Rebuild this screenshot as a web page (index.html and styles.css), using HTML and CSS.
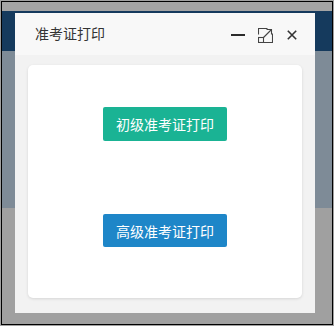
FILE: index.html
```html
<!DOCTYPE html>
<html lang="zh">
<head>
<meta charset="utf-8">
<link rel="stylesheet" href="styles.css">
</head>
<body>
<div class="screen">
  <div class="band band-top"></div>
  <div class="band band-navy"></div>
  <div class="band band-mid"></div>
  <div class="band band-bottom"></div>

  <div class="dialog">
    <div class="dialog-head">
      <span class="dialog-title">准考证打印</span>
      <div class="dialog-tools">
        <svg class="ico ico-min" width="14" height="14" viewBox="0 0 14 14"><rect x="0" y="6" width="14" height="2" fill="#2b2b2b"/></svg>
        <svg class="ico ico-max" width="15" height="15" viewBox="0 0 15 15" fill="none" stroke="#444" stroke-width="1.1">
          <path d="M0.5 6.5 V0.5 H9.5"/>
          <path d="M14.5 5.5 V14.5 H5.5"/>
          <rect x="0.5" y="9.5" width="5" height="5"/>
          <path d="M5.5 9.5 L13.5 1.5"/>
          <path d="M8.5 1.5 H13.5 V6.5"/>
        </svg>
        <svg class="ico ico-close" width="10" height="10" viewBox="0 0 10 10" stroke="#333" stroke-width="1.6"><path d="M0.8 0.8 L9.2 9.2 M9.2 0.8 L0.8 9.2"/></svg>
      </div>
    </div>
    <div class="dialog-body">
      <div class="card">
        <button class="btn btn-green">初级准考证打印</button>
        <button class="btn btn-blue">高级准考证打印</button>
      </div>
    </div>
  </div>
</div>
</body>
</html>
```
FILE: styles.css
```css
html, body {
  margin: 0;
  padding: 0;
}
body {
  background: #a0a0a0;
  padding: 1px;
  width: 334px;
  height: 326px;
  box-sizing: border-box;
  font-family: "Noto Sans CJK SC", "Noto Sans", sans-serif;
}
.screen {
  position: relative;
  width: 332px;
  height: 324px;
  box-sizing: border-box;
  border: 1px solid #000;
  display: flex;
  flex-direction: column;
  overflow: hidden;
}
.band-top { height: 9px; background: #a4a4a4; }
.band-navy { height: 40px; background: #153a5d; }
.band-mid { height: 157px; background: #7e8b97; }
.band-bottom { flex: 1; background: #a0a0a0; }

.dialog {
  position: absolute;
  left: 13px;
  top: 11px;
  width: 300px;
  height: 300px;
  background: #f2f2f2;
  display: flex;
  flex-direction: column;
}
.dialog-head {
  height: 42px;
  background: #f8f8f8;
  display: flex;
  align-items: center;
  padding: 0 18px 0 20px;
}
.dialog-title {
  font-size: 14px;
  color: #333;
  flex: 1;
  margin-top: -2px;
}
.dialog-tools {
  display: flex;
  align-items: center;
  margin-top: 2px;
}
.ico { display: block; }
.ico-max { margin-left: 13px; }
.ico-close { margin-left: 14px; }

.dialog-body {
  flex: 1;
  padding: 10px 13px 15px 13px;
  display: flex;
}
.card {
  flex: 1;
  background: #fff;
  border-radius: 5px;
  box-shadow: 0 1px 3px rgba(0,0,0,0.12);
  display: flex;
  flex-direction: column;
  align-items: center;
  padding-top: 42px;
}
.btn {
  width: 124px;
  height: 34px;
  border: none;
  border-radius: 2px;
  color: #fff;
  font-family: "Noto Sans CJK SC", sans-serif;
  font-size: 14px;
  padding: 0;
}
.btn-green { background: #1ab394; }
.btn-blue { background: #1e86c8; margin-top: 73px; height: 33px; }
```
